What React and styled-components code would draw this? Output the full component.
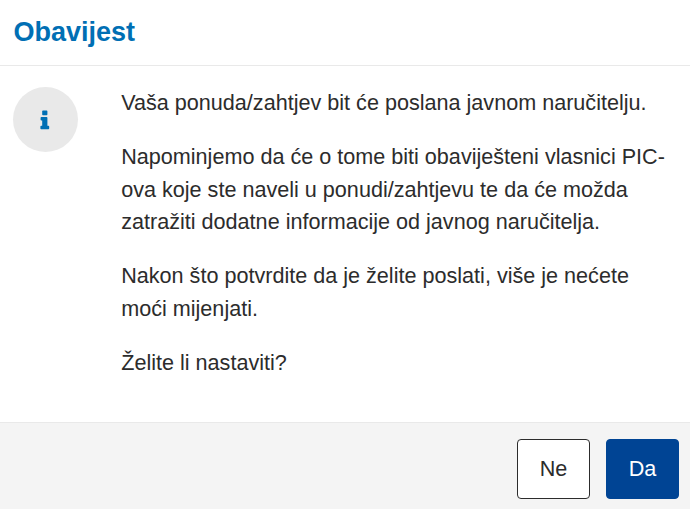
import React from "react";
import styled, { createGlobalStyle } from "styled-components";

const GlobalStyle = createGlobalStyle`
  * { box-sizing: border-box; }
  body { margin: 0; background: #fff; }
`;

const Dialog = styled.section`
  display: flex;
  flex-direction: column;
  width: 690px;
  height: 509px;
  overflow: hidden;
  background: #fff;
  color: #2c2c2c;
  font-family: Arial, "Liberation Sans", sans-serif;
  font-size: 21.6px;
  line-height: 32.5px;
`;

const Header = styled.header`
  flex: none;
  height: 66px;
  padding: 16px 13.5px 0;
  border-bottom: 1px solid #e9e9e9;
`;

const Title = styled.h1`
  margin: 0;
  color: #006fb4;
  font-size: 27px;
  font-weight: 700;
  line-height: 33px;
`;

const Body = styled.main`
  flex: 1;
  display: flex;
  align-items: flex-start;
  gap: 43.2px;
  padding: 21px 13px 0;
`;

const IconBadge = styled.div`
  flex: none;
  display: flex;
  align-items: center;
  justify-content: center;
  width: 65px;
  height: 65px;
  border-radius: 50%;
  background: #e9e9e9;
  color: #006fb4;
`;

const Message = styled.div`
  display: flex;
  flex-direction: column;
  gap: 21.5px;
  white-space: nowrap;
`;

const Paragraph = styled.p`
  margin: 0;
`;

const Footer = styled.footer`
  flex: none;
  display: flex;
  justify-content: flex-end;
  gap: 16px;
  height: 87px;
  padding: 16px 11px 0;
  border-top: 1px solid #e9e9e9;
  background: #f4f4f4;
`;

const Button = styled.button`
  width: 73px;
  height: 60px;
  padding: 1px 0 0;
  border: 1px solid ${(p) => (p.$primary ? "#004494" : "#2c2c2c")};
  border-radius: 4px;
  background: ${(p) => (p.$primary ? "#004494" : "#fff")};
  color: ${(p) => (p.$primary ? "#fff" : "#2c2c2c")};
  font: inherit;
`;

const InfoIcon = () => (
  <svg width="11" height="21" viewBox="0.8 0 11 21" fill="currentColor" aria-hidden="true">
    <rect x="3" y="1.6" width="5.2" height="4.6" rx="0.8" />
    <path d="M2.2 8H7.4Q8.2 8 8.2 8.8V16.8H9.2Q10 16.8 10 17.6V19.5Q10 20.3 9.2 20.3H2Q1.2 20.3 1.2 19.5V17.6Q1.2 16.8 2 16.8H3V11.5H2.2Q1.4 11.5 1.4 10.7V8.8Q1.4 8 2.2 8Z" />
  </svg>
);

const paragraphs = [
  ["Vaša ponuda/zahtjev bit će poslana javnom naručitelju."],
  [
    "Napominjemo da će o tome biti obaviješteni vlasnici PIC-",
    "ova koje ste naveli u ponudi/zahtjevu te da će možda",
    "zatražiti dodatne informacije od javnog naručitelja.",
  ],
  ["Nakon što potvrdite da je želite poslati, više je nećete", "moći mijenjati."],
  ["Želite li nastaviti?"],
];

export default function App() {
  return (
    <>
      <GlobalStyle />
      <Dialog role="dialog" aria-labelledby="title">
        <Header>
          <Title id="title">Obavijest</Title>
        </Header>
        <Body>
          <IconBadge>
            <InfoIcon />
          </IconBadge>
          <Message>
            {paragraphs.map((lines) => (
              <Paragraph key={lines[0]}>
                {lines.map((line, i) => (
                  <React.Fragment key={line}>
                    {i > 0 && <br />}
                    {line}
                  </React.Fragment>
                ))}
              </Paragraph>
            ))}
          </Message>
        </Body>
        <Footer>
          <Button type="button">Ne</Button>
          <Button type="button" $primary>Da</Button>
        </Footer>
      </Dialog>
    </>
  );
}
